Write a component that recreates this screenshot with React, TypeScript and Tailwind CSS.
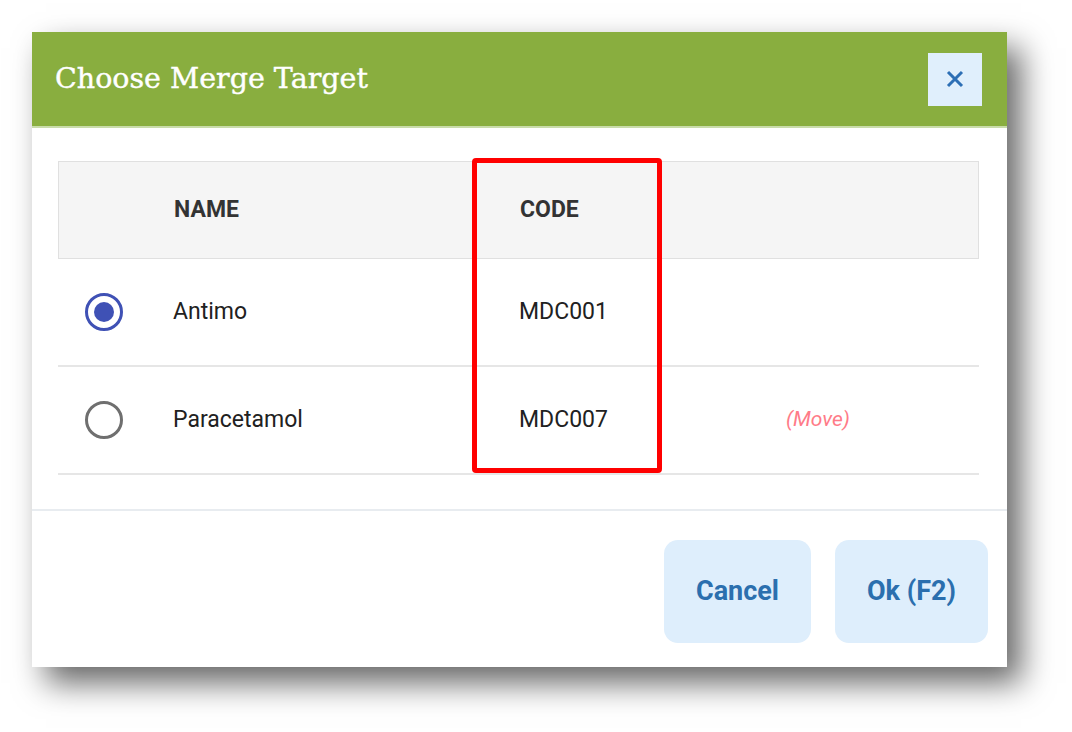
import { useState } from "react";

const rows = [
  { name: "Antimo", code: "MDC001", note: "" },
  { name: "Paracetamol", code: "MDC007", note: "(Move)" },
];

const font = { fontFamily: "Roboto, 'Noto Sans', sans-serif" };

function Radio({ checked }: { checked: boolean }) {
  return (
    <span
      className={`flex h-[38px] w-[38px] items-center justify-center rounded-full border-[3px] ${
        checked ? "border-[#3f51b5]" : "border-[#6f6f6f]"
      }`}
    >
      {checked ? <span className="h-[20px] w-[20px] rounded-full bg-[#3f51b5]" /> : null}
    </span>
  );
}

export default function App() {
  const [selected, setSelected] = useState(0);

  return (
    <div className="min-h-screen bg-white p-[32px]" style={font}>
      <div className="relative flex h-[635px] w-[975px] flex-col bg-white shadow-[14px_16px_30px_rgba(0,0,0,0.6)]">
        <header className="flex h-[96px] shrink-0 items-center justify-between border-b-2 border-[#c9dcaa] bg-[#89ae3f] pl-[23px] pr-[25px]">
          <h1 className="text-[28.5px] text-white [font-family:'DejaVu_Serif',serif] [-webkit-text-stroke:0.4px_white]">
            Choose Merge Target
          </h1>
          <button className="flex h-[53px] w-[54px] items-center justify-center bg-[#e0effc] text-[#2d6fb5]">
            <svg width="20" height="20" viewBox="0 0 20 20" fill="none">
              <path d="M3 3L17 17M17 3L3 17" stroke="currentColor" strokeWidth="3" />
            </svg>
          </button>
        </header>

        <div className="mx-[26px] mt-[33px] mr-[28px]">
          <div className="grid h-[98px] grid-cols-[115px_346px_181px_1fr] items-center border border-[#e0e0e0] bg-[#f5f5f5] text-[23px] font-bold text-[#333]">
            <span />
            <span>NAME</span>
            <span>CODE</span>
            <span />
          </div>
          {rows.map((r, i) => (
            <div
              key={r.code}
              onClick={() => setSelected(i)}
              className="grid h-[108px] cursor-pointer grid-cols-[115px_346px_181px_1fr] items-center border-b-2 border-[#e6e6e6] text-[23px] text-[#212121]"
            >
              <span className="pl-[27px]">
                <Radio checked={selected === i} />
              </span>
              <span>{r.name}</span>
              <span>{r.code}</span>
              <span className="pl-[86px] text-[21px] italic text-[#ff7b88]">{r.note}</span>
            </div>
          ))}
        </div>

        <div className="mt-auto flex justify-end gap-[24px] border-t-2 border-[#e8ecf0] pt-[29px] pr-[19px] pb-[24px]">
          <button className="h-[103px] w-[147px] rounded-[14px] bg-[#deeefc] text-[27px] font-bold text-[#2b6fae]">
            Cancel
          </button>
          <button className="h-[103px] w-[153px] rounded-[14px] bg-[#deeefc] text-[27px] font-bold text-[#2b6fae]">
            Ok (F2)
          </button>
        </div>

        <div className="pointer-events-none absolute left-[440px] top-[126px] h-[315px] w-[190px] rounded-[4px] border-[5px] border-[#ff0000]" />
      </div>
    </div>
  );
}
